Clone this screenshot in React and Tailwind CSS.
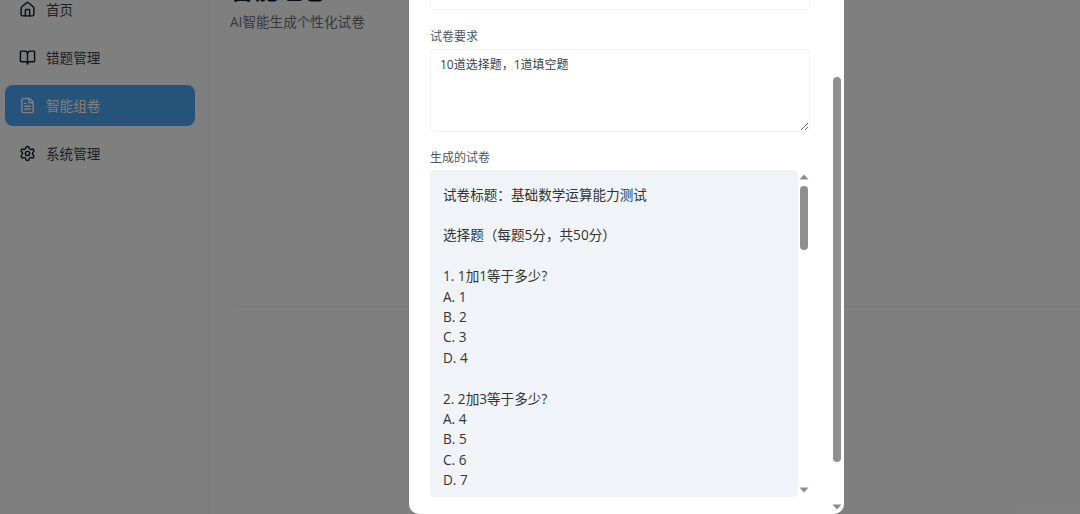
import React from "react";
import { House, BookOpen, FileText, Settings } from "lucide-react";

const nav = [
  { label: "首页", Icon: House },
  { label: "错题管理", Icon: BookOpen },
  { label: "智能组卷", Icon: FileText, active: true },
  { label: "系统管理", Icon: Settings },
];

const paper = `试卷标题：基础数学运算能力测试

选择题（每题5分，共50分）

1. 1加1等于多少?
A. 1
B. 2
C. 3
D. 4

2. 2加3等于多少?
A. 4
B. 5
C. 6
D. 7

3. 5减2等于多少?
A. 1
B. 2`;

function Arrow({ up }) {
  return (
    <svg width="10" height="6" viewBox="0 0 10 6" className="block shrink-0">
      <path d={up ? "M5 0.5 L9.5 5.5 L0.5 5.5 Z" : "M0.5 0.5 L9.5 0.5 L5 5.5 Z"} fill="#8c8c8c" />
    </svg>
  );
}

export default function App() {
  return (
    <div
      className="relative flex h-[514px] w-[1080px] overflow-hidden bg-white text-[13.6px] leading-[20.4px]"
      style={{ fontFamily: '"Open Sans", "Noto Sans CJK SC", sans-serif' }}
    >
      <aside className="w-[210px] shrink-0 border-r border-[#f2f4f5] bg-white pl-[5px] pr-[14px]">
        <nav className="-mt-[11px] flex flex-col gap-[7px]">
          {nav.map(({ label, Icon, active }) => (
            <div
              key={label}
              className={
                "flex h-[41px] items-center gap-[10px] rounded-[8px] pl-[14px] pr-[14px] " +
                (active ? "bg-[#4ca6f5] text-white" : "text-[#374151]")
              }
            >
              <Icon size={17} strokeWidth={2} className={active ? "text-white" : "text-[#111827]"} />
              <span className="pt-[2px]">{label}</span>
            </div>
          ))}
        </nav>
      </aside>

      <main className="min-w-0 flex-1 pl-[20px]">
        <h1 className="-mt-[28px] h-[36px] whitespace-nowrap text-[24px] font-bold leading-[36px] text-[#111827]">
          智能组卷
        </h1>
        <p className="mt-[4px] whitespace-nowrap leading-[20.4px] text-[#6b7280]">AI智能生成个性化试卷</p>
        <div className="mt-[16px] h-[259px] w-[900px] rounded-[10px] border-b border-[#ececec] bg-white shadow-[0_0_3px_rgba(0,0,0,0.03)]" />
      </main>

      <div className="absolute inset-0 flex items-end justify-start bg-black/50 pl-[409px]">
        <div className="flex w-[435px] shrink-0 rounded-b-[10px] bg-white pl-[21px]">
          <div className="w-[380px] shrink-0 pb-[17px]">
            <div className="mb-[18px] h-[30px] rounded-b-[5px] border-b border-x border-[#f1f1f1]" />
            <label className="mb-[3px] block text-[12px] leading-[18px] text-[#4b5563]">试卷要求</label>
            <textarea
              readOnly
              defaultValue="10道选择题，1道填空题"
              className="mb-[17px] block h-[83px] w-full resize-y rounded-[5px] border border-[#f1f1f1] px-[9px] py-[6px] text-[12px] leading-[18px] text-[#374151] outline-none"
            />
            <label className="mb-[3px] block text-[12px] leading-[18px] text-[#4b5563]">生成的试卷</label>
            <div className="flex h-[327px]">
              <div className="h-full w-[368px] shrink-0 overflow-hidden whitespace-pre-wrap rounded-[4px] bg-[#f0f4f8] px-[13px] pt-[14.6px] text-[#333333]">
                {paper}
              </div>
              <div className="flex flex-1 flex-col items-center pb-[4px] pt-[4px]">
                <Arrow up />
                <div className="mt-[6px] h-[64px] w-[8px] rounded-full bg-[#8f8f8f]" />
                <div className="flex-1" />
                <Arrow />
              </div>
            </div>
          </div>
          <div className="ml-[23px] flex w-[8px] flex-col items-center pb-[4px]">
            <div className="flex-1" />
            <div className="h-[385px] w-[8px] shrink-0 rounded-full bg-[#8f8f8f]" />
            <div className="h-[42px] shrink-0" />
            <Arrow />
          </div>
        </div>
      </div>
    </div>
  );
}
